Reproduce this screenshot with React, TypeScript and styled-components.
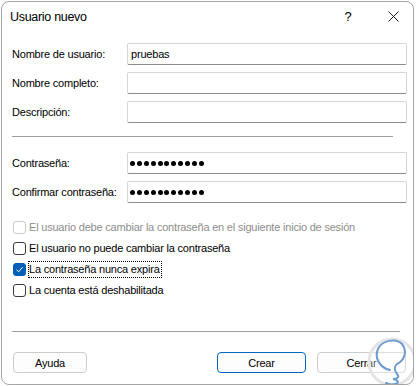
import React from 'react';
import styled, { createGlobalStyle } from 'styled-components';

const GlobalStyle = createGlobalStyle`
  html, body {
    margin: 0;
    padding: 0;
    background: #ffffff;
  }
  body {
    font-family: "Liberation Sans", Arial, sans-serif;
    color: #000;
  }
`;

const Window = styled.div`
  position: relative;
  box-sizing: border-box;
  margin: 1px 0 0 1px;
  width: 413px;
  height: 384px;
  border: 1px solid #a6a6a6;
  border-radius: 8px;
  background: #ffffff;
  display: flex;
  flex-direction: column;
  overflow: hidden;
`;

const TitleBar = styled.div`
  height: 29px;
  display: flex;
  align-items: center;
  padding-left: 8px;
`;

const Title = styled.div`
  flex: 1;
  font-size: 12.5px;
  letter-spacing: -0.3px;
`;

const TitleButton = styled.div<{ $w: number }>`
  width: ${({ $w }) => $w}px;
  height: 29px;
  display: flex;
  align-items: center;
  justify-content: center;
  font-size: 13px;
`;

const Body = styled.div`
  flex: 1;
  display: flex;
  flex-direction: column;
  padding: 12px 6px 0 10px;
`;

const FieldGrid = styled.div`
  display: grid;
  grid-template-columns: 115px 1fr;
  row-gap: 7px;
  align-items: center;
`;

const Label = styled.label`
  font-size: 11px;
  letter-spacing: -0.2px;
  color: #000;
`;

const TextBox = styled.input`
  box-sizing: border-box;
  height: 22px;
  width: 100%;
  margin: 0;
  border: 1px solid #d6d6d6;
  border-bottom-color: #8c8c8c;
  border-radius: 2px;
  padding: 0 3px;
  font-family: "Liberation Sans", Arial, sans-serif;
  font-size: 11px;
  letter-spacing: -0.2px;
  color: #000;
  background: #fff;
  outline: none;
`;

const Dots = styled.div`
  box-sizing: border-box;
  height: 22px;
  border: 1px solid #d6d6d6;
  border-bottom-color: #8c8c8c;
  border-radius: 2px;
  padding: 0 2px;
  display: flex;
  align-items: center;
  gap: 1.9px;
`;

const Dot = styled.span`
  width: 5px;
  height: 5px;
  border-radius: 50%;
  background: #000;
`;

const Separator = styled.div<{ $right: number; $top: number; $bottom: number }>`
  height: 1px;
  background: #a0a0a0;
  margin: ${({ $top, $right, $bottom }) => `${$top}px ${$right}px ${$bottom}px 0`};
`;

const Checks = styled.div`
  display: flex;
  flex-direction: column;
  margin-top: 14px;
  padding-left: 1px;
`;

const CheckRow = styled.div<{ $disabled?: boolean }>`
  height: 21px;
  display: flex;
  align-items: center;
  gap: 2px;
  font-size: 11px;
  letter-spacing: -0.2px;
  color: ${({ $disabled }) => ($disabled ? '#8d8d8d' : '#000')};
`;

const Box = styled.span<{ $checked?: boolean; $disabled?: boolean }>`
  box-sizing: border-box;
  width: 13px;
  height: 13px;
  border-radius: 3px;
  display: flex;
  align-items: center;
  justify-content: center;
  border: 1px solid
    ${({ $checked, $disabled }) => ($checked ? '#005fb8' : $disabled ? '#cbcbcb' : '#3a3a3a')};
  background: ${({ $checked }) => ($checked ? '#005fb8' : '#fff')};
`;

const CheckText = styled.span<{ $focused?: boolean }>`
  padding: 1px 1px 2px 0;
  border: 1px dotted ${({ $focused }) => ($focused ? '#000' : 'transparent')};
`;

const Footer = styled.div`
  display: flex;
  align-items: center;
  padding: 20px 1px 0 1px;
`;

const Button = styled.button<{ $primary?: boolean; $wide?: boolean }>`
  box-sizing: border-box;
  height: 21px;
  width: ${({ $wide }) => ($wide ? 89 : 74)}px;
  margin: 0;
  border-radius: 4px;
  border: 1px solid ${({ $primary }) => ($primary ? '#0067c0' : '#cccccc')};
  background: #fdfdfd;
  font-family: "Liberation Sans", Arial, sans-serif;
  font-size: 11px;
  letter-spacing: -0.2px;
  color: #000;
  padding: 0;
`;

const Spacer = styled.div`
  flex: 1;
`;

const ButtonGap = styled.div`
  width: 11px;
`;

const Watermark = styled.svg`
  position: absolute;
  left: 364px;
  top: 332px;
`;

const CheckMark = () => (
  <svg width="9" height="9" viewBox="0 0 9 9">
    <path d="M1.5 4.8 L3.6 6.8 L7.6 2.2" fill="none" stroke="#fff" strokeWidth="1" />
  </svg>
);

const CloseIcon = () => (
  <svg width="11" height="11" viewBox="0 0 11 11">
    <path d="M0.5 0.5 L10.5 10.5 M10.5 0.5 L0.5 10.5" stroke="#1a1a1a" strokeWidth="1" />
  </svg>
);

const fields = ['Nombre de usuario:', 'Nombre completo:', 'Descripción:'];

const options = [
  { text: 'El usuario debe cambiar la contraseña en el siguiente inicio de sesión', disabled: true },
  { text: 'El usuario no puede cambiar la contraseña' },
  { text: 'La contraseña nunca expira', checked: true, focused: true },
  { text: 'La cuenta está deshabilitada' },
];

const PasswordBox: React.FC<{ count: number }> = ({ count }) => (
  <Dots>
    {Array.from({ length: count }).map((_, i) => (
      <Dot key={i} />
    ))}
  </Dots>
);

const App: React.FC = () => {
  return (
    <>
      <GlobalStyle />
      <Window>
        <TitleBar>
          <Title>Usuario nuevo</Title>
          <TitleButton $w={50}>?</TitleButton>
          <TitleButton $w={40}>
            <CloseIcon />
          </TitleButton>
        </TitleBar>

        <Body>
          <FieldGrid>
            {fields.map((f, i) => (
              <React.Fragment key={f}>
                <Label>{f}</Label>
                <TextBox readOnly defaultValue={i === 0 ? 'pruebas' : ''} />
              </React.Fragment>
            ))}
          </FieldGrid>

          <Separator $top={13} $right={14} $bottom={15} />

          <FieldGrid>
            <Label>Contraseña:</Label>
            <PasswordBox count={11} />
            <Label>Confirmar contraseña:</Label>
            <PasswordBox count={11} />
          </FieldGrid>

          <Checks>
            {options.map((o) => (
              <CheckRow key={o.text} $disabled={o.disabled}>
                <Box $checked={o.checked} $disabled={o.disabled}>
                  {o.checked && <CheckMark />}
                </Box>
                <CheckText $focused={o.focused}>{o.text}</CheckText>
              </CheckRow>
            ))}
          </Checks>

          <Separator $top={30} $right={7} $bottom={0} />

          <Footer>
            <Button>Ayuda</Button>
            <Spacer />
            <Button $primary $wide>Crear</Button>
            <ButtonGap />
            <Button $wide>Cerrar</Button>
          </Footer>
        </Body>

        <Watermark width="52" height="54" viewBox="0 0 52 54">
          <circle cx="26" cy="28" r="23" fill="rgba(255,255,255,0.35)" stroke="#e4e4e4" strokeWidth="3" />
          <path
            d="M24 36 C14 34 8 24 12 15 C16 6 30 4 36 10 C42 17 38 27 31 30 C28 32 28 36 31 40 C34 43 31 45 27 45 C32 46 34 49 29 50 C25 51 22 50 20 49"
            fill="none"
            stroke="#6d9bd1"
            strokeWidth="2"
            strokeLinecap="round"
          />
        </Watermark>
      </Window>
    </>
  );
};

export default App;
